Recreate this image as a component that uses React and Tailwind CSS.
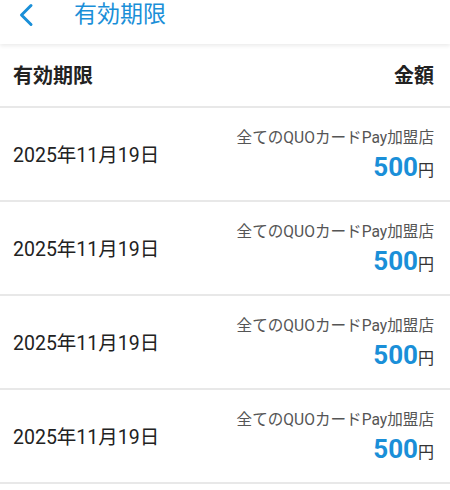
// 有効期限 list screen
const rows = [
  { date: "2025年11月19日", shop: "全てのQUOカードPay加盟店", amount: 500 },
  { date: "2025年11月19日", shop: "全てのQUOカードPay加盟店", amount: 500 },
  { date: "2025年11月19日", shop: "全てのQUOカードPay加盟店", amount: 500 },
  { date: "2025年11月19日", shop: "全てのQUOカードPay加盟店", amount: 500 },
];

const BackIcon = () => (
  <svg width="16" height="24" viewBox="0 0 16 24" fill="none">
    <path d="M13 2.5 L3.5 12 L13 21.5" stroke="#1a8fd8" strokeWidth="3" strokeLinecap="round" strokeLinejoin="round" />
  </svg>
);

const App = () => {
  return (
    <div className="w-[450px] min-h-[490px] bg-white [font-family:Roboto,'Noto_Sans_CJK_JP',sans-serif]">
      <header className="relative z-10 h-[44px] flex items-center bg-white shadow-[0_2px_4px_rgba(0,0,0,0.08)]">
        <button className="w-[50px] h-full flex items-center justify-center pl-[1px] pb-[14px]">
          <BackIcon />
        </button>
        <h1 className="ml-[24px] -mt-[15px] text-[23px] leading-none text-[#1a8fd8]">有効期限</h1>
      </header>

      <div className="h-[64px] flex items-center justify-between pl-[13px] pr-[16px] border-b-2 border-[#e8e8e8] pt-[2px]">
        <span className="text-[20px] font-bold text-[#222]">有効期限</span>
        <span className="text-[20px] font-bold text-[#222]">金額</span>
      </div>

      {rows.map((row, i) => (
        <div key={i} className="h-[94px] flex items-center justify-between pl-[13px] pr-[16px] border-b-2 border-[#e8e8e8]">
          <span className="text-[19.5px] text-[#222] pt-[4px]">{row.date}</span>
          <div className="flex flex-col items-end pt-[5px]">
            <span className="text-[15.6px] leading-[20px] text-[#555]">{row.shop}</span>
            <span className="flex items-baseline leading-[30px] mt-[4px]">
              <span className="text-[26px] font-bold text-[#1a8fd8]">{row.amount}</span>
              <span className="text-[16px] text-[#333]">円</span>
            </span>
          </div>
        </div>
      ))}
    </div>
  );
};

export default App;
